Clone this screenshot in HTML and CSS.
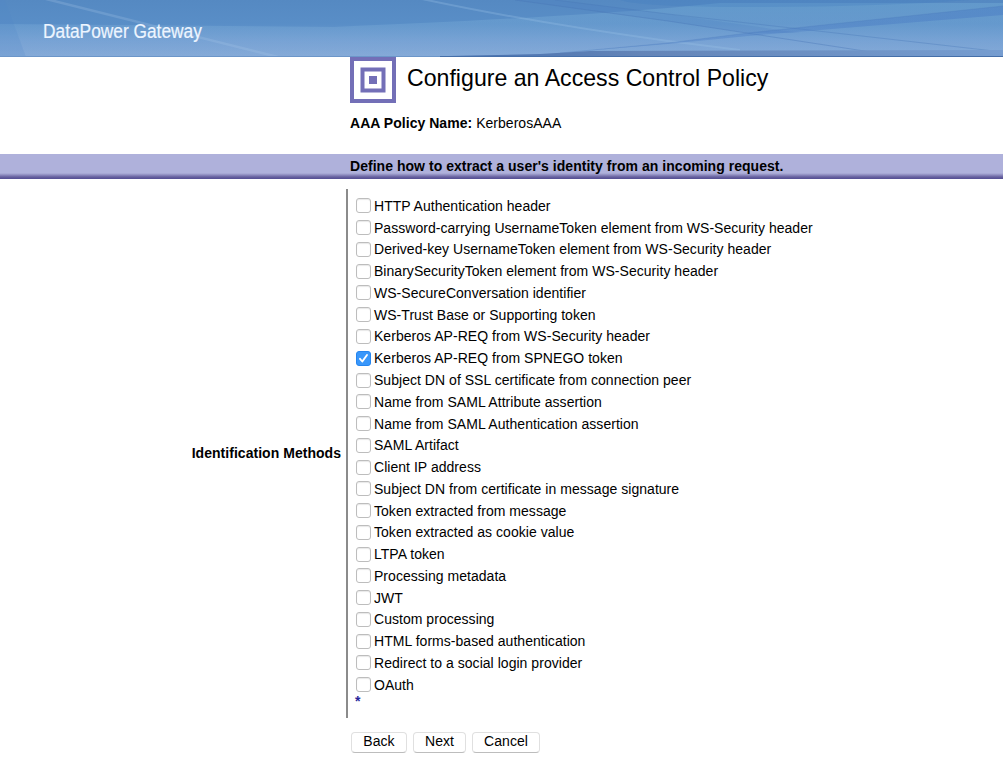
FILE: index.html
```html
<!DOCTYPE html>
<html lang="en">
<head>
<meta charset="utf-8">
<title>Configure an Access Control Policy</title>
<link rel="stylesheet" href="styles.css">
</head>
<body>
<header class="banner">
  <svg class="banner-art" viewBox="0 0 1003 57" preserveAspectRatio="none" aria-hidden="true">
    <defs>
      <linearGradient id="haze" x1="0" y1="0" x2="0" y2="1"><stop offset="0" stop-color="#75b0d8" stop-opacity=".4"/><stop offset="1" stop-color="#a4c4e8" stop-opacity=".05"/></linearGradient>
      <linearGradient id="base" x1="0" y1="0" x2="1" y2="0"><stop offset="0" stop-color="#3d69ab"/><stop offset=".4" stop-color="#6485b8"/><stop offset="1" stop-color="#769dd0"/></linearGradient>
      <linearGradient id="beam" x1="0" y1="0" x2="1" y2="0"><stop offset="0" stop-color="#4a7cc4" stop-opacity=".3"/><stop offset="1" stop-color="#4a7cc4" stop-opacity=".5"/></linearGradient>
    </defs>
    <path d="M0 24L334 27Q550 18 668 8L720 3H1003V57H0Z" fill="url(#haze)"/>
    <path d="M0 0H5L26 57H0Z" fill="#4f87c7" opacity=".2"/>
    <path d="M42 -2L278 57" stroke="#a9c8e9" stroke-width="2.5" opacity=".25"/>
    <path d="M422 -1Q530 22 668 41L740 50" fill="none" stroke="#9ac2e8" stroke-width="2" opacity=".3"/>
    <path d="M515 0H555L668 14L800 33H748L668 21Z" fill="#477dc0" opacity=".22"/>
    <path d="M515 0L668 21L897 56" fill="none" stroke="#4a78b8" opacity=".42"/>
    <path d="M555 0L668 14L994 51L1003 52" fill="none" stroke="#4a78b8" opacity=".38"/>
    <path d="M560 53L668 43L748 33L1003 6V15L748 36L668 44Z" fill="url(#beam)"/>
    <path d="M560 53L668 43L748 33L1003 6" fill="none" stroke="#4a78b8" stroke-width=".8" opacity=".35"/>
    <path d="M620 0Q640 7 750 7Q880 7 970 0Z" fill="#427ebf" opacity=".3"/>
    <path d="M400 57L540 54L590 51L1003 50V57Z" fill="url(#base)"/>
    <path d="M0 56.5H1003" stroke="#6c96c9"/>
    <path d="M440 56.5H1003" stroke="#456fa9"/>
  </svg>
  <span class="product">DataPower Gateway</span>
</header>
<main>
  <div class="title-row">
    <svg class="policy-icon" viewBox="0 0 46 46" aria-hidden="true"><path d="M2 2H44V44H2ZM12.500 12.500H33.500V33.500H12.500Z" fill="none" stroke="#736fb7" stroke-width="4"/><rect x="19" y="19" width="8" height="8" fill="#736fb7"/></svg>
    <h1><span>Configure an Access Control Policy</span></h1>
  </div>
  <p class="policy"><b>AAA Policy Name:</b> <span>KerberosAAA</span></p>
  <h2><span>Define how to extract a user's identity from an incoming request.</span></h2>
  <section class="form-row">
    <div class="caption"><span>Identification Methods</span></div>
    <div class="methods">
      <label><input type="checkbox"><span>HTTP Authentication header</span></label>
      <label><input type="checkbox"><span>Password-carrying UsernameToken element from WS-Security header</span></label>
      <label><input type="checkbox"><span>Derived-key UsernameToken element from WS-Security header</span></label>
      <label><input type="checkbox"><span>BinarySecurityToken element from WS-Security header</span></label>
      <label><input type="checkbox"><span>WS-SecureConversation identifier</span></label>
      <label><input type="checkbox"><span>WS-Trust Base or Supporting token</span></label>
      <label><input type="checkbox"><span>Kerberos AP-REQ from WS-Security header</span></label>
      <label><input type="checkbox" checked><span>Kerberos AP-REQ from SPNEGO token</span></label>
      <label><input type="checkbox"><span>Subject DN of SSL certificate from connection peer</span></label>
      <label><input type="checkbox"><span>Name from SAML Attribute assertion</span></label>
      <label><input type="checkbox"><span>Name from SAML Authentication assertion</span></label>
      <label><input type="checkbox"><span>SAML Artifact</span></label>
      <label><input type="checkbox"><span>Client IP address</span></label>
      <label><input type="checkbox"><span>Subject DN from certificate in message signature</span></label>
      <label><input type="checkbox"><span>Token extracted from message</span></label>
      <label><input type="checkbox"><span>Token extracted as cookie value</span></label>
      <label><input type="checkbox"><span>LTPA token</span></label>
      <label><input type="checkbox"><span>Processing metadata</span></label>
      <label><input type="checkbox"><span>JWT</span></label>
      <label><input type="checkbox"><span>Custom processing</span></label>
      <label><input type="checkbox"><span>HTML forms-based authentication</span></label>
      <label><input type="checkbox"><span>Redirect to a social login provider</span></label>
      <label><input type="checkbox"><span>OAuth</span></label>
      <div class="required">*</div>
    </div>
  </section>
  <div class="actions"><button class="back">Back</button><button class="next">Next</button><button class="cancel">Cancel</button></div>
</main>
</body>
</html>
```

FILE: styles.css
```css
* { box-sizing: border-box; }
body { margin: 0; height: 784px; overflow: hidden; background: #fff; color: #000; font: 14px/20px "Liberation Sans", Arial, sans-serif; letter-spacing: .035px; }
.banner { position: relative; height: 57px; padding: 20px 0 0 43px; background: linear-gradient(#5589c2, #598ec7 42%, #719dd1 70%, #84a9d7); }
.banner-art { position: absolute; inset: 0; width: 100%; height: 100%; }
.product { position: relative; display: inline-block; color: #edf5ff; font-size: 20px; line-height: 22px; letter-spacing: 0; white-space: nowrap; transform: scaleX(.866); transform-origin: left; -webkit-text-stroke: .2px #edf5ff; }
.title-row { display: flex; height: 47px; padding-left: 350px; gap: 11px; }
.policy-icon { width: 46px; height: 46px; }
h1 { margin: 6px 0 0; font-size: 24px; line-height: 30px; font-weight: 400; letter-spacing: 0; white-space: nowrap; transform: scaleX(.964); transform-origin: left; }
.policy { height: 20px; margin: 9px 0 21px 350px; white-space: nowrap; }
h2 { height: 25px; margin: 0; padding: 2px 0 0 350px; font-size: 14px; line-height: 20px; background: linear-gradient(#afb1db 0 19px, #9f9fcd 20px, #66609f 23px, #544e93); }
.form-row { display: flex; height: 529px; margin-top: 10px; }
.caption { display: flex; align-items: center; justify-content: flex-end; width: 346px; padding: 0 5px 2px 0; font-weight: 700; }
.methods { flex: 1; border-left: 2px solid #8b8b8b; padding: 6px 0 0 8px; }
label { display: flex; align-items: center; gap: 3px; height: 21.78px; white-space: nowrap; }
input { appearance: none; flex: none; width: 15px; height: 15px; margin: 0; border: 1px solid #bdbdbd; border-radius: 3px; background: #fff; box-shadow: inset 0 1px 1px #e8e8e8; }
input:checked { border-color: #2585ef; background: #3997fa url("data:image/svg+xml,%3Csvg xmlns='http://www.w3.org/2000/svg' viewBox='0 0 13 13'%3E%3Cpath d='M3 6.800L5.300 9.500L10 3' fill='none' stroke='white' stroke-width='1.900' stroke-linecap='round' stroke-linejoin='round'/%3E%3C/svg%3E") center/13px; box-shadow: none; }
.required { height: 16px; margin-left: -1px; color: #29269b; font-weight: 700; line-height: 10px; }
.actions { display: flex; gap: 6px; margin: 14px 0 0 351px; }
button { height: 21px; padding: 0 0 3px; border: 1px solid #e0e0e0; border-bottom-color: #bdbdbd; border-radius: 4px; background: #fff; color: #000; font: inherit; line-height: 17px; letter-spacing: inherit; }
.back { width: 56px; }
.next { width: 53px; }
.cancel { width: 68px; }
```
